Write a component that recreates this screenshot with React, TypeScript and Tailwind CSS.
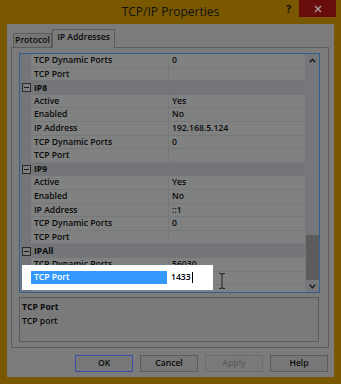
import React from "react";

type Row = { t: "cat" | "item"; n: string; v?: string };

const rows: Row[] = [
  { t: "item", n: "TCP Dynamic Ports", v: "0" },
  { t: "item", n: "TCP Port", v: "" },
  { t: "cat", n: "IP8" },
  { t: "item", n: "Active", v: "Yes" },
  { t: "item", n: "Enabled", v: "No" },
  { t: "item", n: "IP Address", v: "192.168.5.124" },
  { t: "item", n: "TCP Dynamic Ports", v: "0" },
  { t: "item", n: "TCP Port", v: "" },
  { t: "cat", n: "IP9" },
  { t: "item", n: "Active", v: "Yes" },
  { t: "item", n: "Enabled", v: "No" },
  { t: "item", n: "IP Address", v: "::1" },
  { t: "item", n: "TCP Dynamic Ports", v: "0" },
  { t: "item", n: "TCP Port", v: "" },
  { t: "cat", n: "IPAll" },
  { t: "item", n: "TCP Dynamic Ports", v: "56030" },
  { t: "item", n: "TCP Port", v: "1433" },
];

function Minus() {
  return (
    <svg width="9" height="9" viewBox="0 0 9 9" className="block">
      <rect x="0.5" y="0.5" width="8" height="8" fill="#7c7e80" stroke="#2a2a2a" />
      <rect x="2" y="4" width="5" height="1" fill="#1a1a1a" />
    </svg>
  );
}

export default function App() {
  return (
    <div
      className="relative w-[341px] h-[384px] bg-[#7a5800] flex flex-col overflow-hidden text-[#0a0a0a]"
      style={{ fontFamily: '"Open Sans", "Noto Sans", sans-serif' }}
    >
      {/* title bar */}
      <div className="relative h-[24px] shrink-0 flex items-center justify-center">
        <span className="text-[12px] leading-none text-[#121212]">TCP/IP Properties</span>
        <span className="absolute left-[286px] top-[3px] text-[11px] font-bold leading-none text-[#121212]">?</span>
        <div className="absolute left-[299px] top-0 w-[37px] h-[17px] bg-[#680d0d] flex items-center justify-center">
          <svg width="8" height="8" viewBox="0 0 8 8">
            <path d="M1 1 L7 7 M7 1 L1 7" stroke="#b0a0a0" strokeWidth="1.3" />
          </svg>
        </div>
      </div>

      {/* content */}
      <div className="flex-1 mx-[7px] mb-[7px] bg-[#7b7b7b] flex flex-col pt-[5px] px-[4px] text-[8.6px] font-semibold">
        {/* tabs */}
        <div className="flex items-end h-[18px] relative z-10">
          <div className="w-[39px] h-[14px] ml-[2px] border border-b-0 border-[#5c5c5c] bg-[#767676] leading-[13px] text-center whitespace-nowrap">
            Protocol
          </div>
          <div className="w-[63px] border border-b-0 border-[#5c5c5c] bg-[#7b7b7b] leading-[15px] text-center -mb-px h-[19px] whitespace-nowrap">
            IP Addresses
          </div>
        </div>
        <div className="w-[318px] h-[301px] border border-[#5c5c5c] flex flex-col pt-[5px] pl-[7px]">
          {/* property grid */}
          <div className="w-[301px] h-[240px] border border-[#33608f] flex bg-[#808181] overflow-hidden">
            <div className="flex-1 flex flex-col">
              {rows.map((r, i) =>
                r.t === "cat" ? (
                  <div key={i} className="h-[13.6px] shrink-0 bg-[#737579] flex items-center">
                    <div className="w-[11px] flex justify-center pl-[2px]">
                      <Minus />
                    </div>
                    <span className="pl-[3px] font-bold leading-none">{r.n}</span>
                  </div>
                ) : (
                  <div key={i} className="h-[13.6px] shrink-0 flex">
                    <div className="w-[11px] bg-[#737579]" />
                    <div className="w-[137px] border-b border-[#76787a] pl-[3px] leading-[12.6px] whitespace-nowrap overflow-hidden">
                      {r.n}
                    </div>
                    <div className="w-px bg-[#76787a]" />
                    <div className="flex-1 border-b border-[#76787a] pl-[3px] leading-[12.6px]">{r.v}</div>
                  </div>
                )
              )}
              <div className="flex-1 flex">
                <div className="w-[11px] bg-[#737579]" />
              </div>
            </div>
            {/* scrollbar */}
            <div className="w-[14px] bg-[#76777a] flex flex-col items-center">
              <div className="h-[13px] flex items-center">
                <svg width="7" height="5" viewBox="0 0 7 5">
                  <path d="M0.8 4.2 L3.5 1.3 L6.2 4.2" fill="none" stroke="#1a1a1a" strokeWidth="1.4" />
                </svg>
              </div>
              <div className="flex-1" />
              <div className="w-[13px] h-[45px] bg-[#5c5c5c] mb-[1px]" />
              <div className="h-[11px] flex items-center">
                <svg width="7" height="5" viewBox="0 0 7 5">
                  <path d="M0.8 0.8 L3.5 3.7 L6.2 0.8" fill="none" stroke="#1a1a1a" strokeWidth="1.4" />
                </svg>
              </div>
            </div>
          </div>
          {/* description */}
          <div className="mt-[4px] w-[300px] h-[45px] border border-[#5c5c5c] bg-[#7a7a7a] px-[2px] pt-[2px]">
            <div className="font-bold leading-[14px]">TCP Port</div>
            <div className="leading-[14px]">TCP port</div>
          </div>
        </div>
        {/* buttons */}
        <div className="flex justify-end gap-[7px] mt-[7px] pr-[2px]">
          <button className="w-[58px] h-[17px] border border-[#3b4fa5] bg-[#777] leading-none">OK</button>
          <button className="w-[58px] h-[17px] border border-[#5c5c5c] bg-[#777] leading-none">Cancel</button>
          <button className="w-[58px] h-[17px] border border-[#6c6c6c] bg-[#7a7a7a] leading-none text-[#5e5e5e]">Apply</button>
          <button className="w-[58px] h-[17px] border border-[#5c5c5c] bg-[#777] leading-none">Help</button>
        </div>
      </div>

      {/* highlight overlay */}
      <div className="absolute left-[22px] top-[265px] w-[191px] h-[25px] bg-white text-[8.6px] font-semibold">
        <div className="absolute left-[9px] top-[6px] w-[136px] h-[13px] bg-[#3399ff] text-white leading-[13px] pl-[3px]">
          TCP Port
        </div>
        <div className="absolute left-[149px] top-[6px] h-[13px] leading-[13px] text-black flex items-center">
          1433<span className="inline-block w-px h-[11px] bg-black ml-px" />
        </div>
      </div>
      {/* I-beam cursor */}
      <svg className="absolute left-[218px] top-[273px]" width="8" height="16" viewBox="0 0 8 16">
        <path d="M1 0.5 H3 Q4 0.5 4 2 V14 Q4 15.5 3 15.5 H1 M7 0.5 H5 Q4 0.5 4 2 M4 14 Q4 15.5 5 15.5 H7" fill="none" stroke="#222" strokeWidth="1" />
      </svg>
    </div>
  );
}
